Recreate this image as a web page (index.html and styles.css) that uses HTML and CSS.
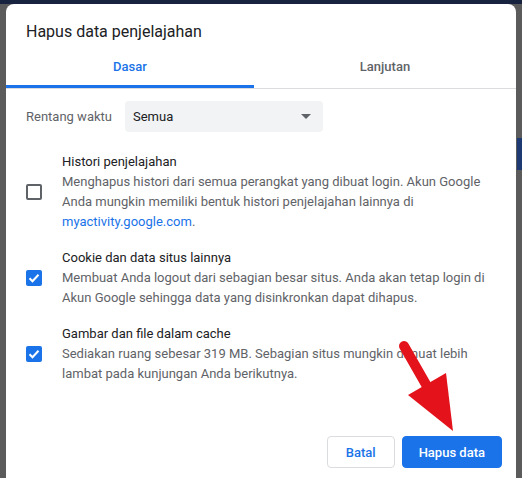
FILE: index.html
```html
<!DOCTYPE html>
<html lang="id">
<head>
  <meta charset="UTF-8">
  <meta name="viewport" content="width=device-width, initial-scale=1">
  <title>Hapus data penjelajahan</title>
  <link rel="stylesheet" href="styles.css">
</head>
<body>

  <div class="dialog">
    <h1 class="title">Hapus data penjelajahan</h1>

    <div class="tabs">
      <div class="tab active">Dasar</div>
      <div class="tab">Lanjutan</div>
    </div>

    <div class="content">
      <div class="range">
        <span class="range-label">Rentang waktu</span>
        <div class="select">
          <span>Semua</span>
          <span class="caret"></span>
        </div>
      </div>

      <div class="item">
        <div class="checkbox"></div>
        <div class="item-text">
          <div class="item-title">Histori penjelajahan</div>
          <div class="item-desc">Menghapus histori dari semua perangkat yang dibuat login. Akun Google Anda mungkin memiliki bentuk histori penjelajahan lainnya di <a href="#">myactivity.google.com</a>.</div>
        </div>
      </div>

      <div class="item">
        <div class="checkbox checked">
          <svg viewBox="0 0 16 16"><path d="M3.5 8.2l3 3 6-6.4" /></svg>
        </div>
        <div class="item-text">
          <div class="item-title">Cookie dan data situs lainnya</div>
          <div class="item-desc">Membuat Anda logout dari sebagian besar situs. Anda akan tetap login di Akun Google sehingga data yang disinkronkan dapat dihapus.</div>
        </div>
      </div>

      <div class="item">
        <div class="checkbox checked">
          <svg viewBox="0 0 16 16"><path d="M3.5 8.2l3 3 6-6.4" /></svg>
        </div>
        <div class="item-text">
          <div class="item-title">Gambar dan file dalam cache</div>
          <div class="item-desc">Sediakan ruang sebesar 319 MB. Sebagian situs mungkin dimuat lebih lambat pada kunjungan Anda berikutnya.</div>
        </div>
      </div>
    </div>

    <div class="footer">
      <button class="btn">Batal</button>
      <button class="btn primary">Hapus data</button>
    </div>
  </div>

  <!-- panah penunjuk ke tombol Hapus data -->
  <svg class="arrow" width="522" height="478" viewBox="0 0 522 478">
    <line x1="404" y1="346" x2="428" y2="388" stroke="#e4121b" stroke-width="10" stroke-linecap="round" />
    <polygon points="408,395 446,373 453,431" fill="#e4121b" />
  </svg>

</body>
</html>
```

FILE: styles.css
```css
body {
  margin: 0;
  height: 478px;
  overflow: hidden;
  padding: 4px 0 0 6px;
  box-sizing: border-box;
  font-family: Roboto, "Liberation Sans", Arial, sans-serif;
  background:
    linear-gradient(#1d3b72, #1d3b72) right 0 top 138px / 5px 32px no-repeat,
    linear-gradient(#182340 0 4px, #5b5b5b 4px);
}

.dialog {
  width: 510px;
  height: 480px;
  background-color: white;
  border-radius: 8px 8px 0 0;
  display: flex;
  flex-direction: column;
}

.title {
  margin: 0;
  padding: 18px 20px 0;
  font-size: 16px;
  font-weight: 400;
  line-height: 20px;
  color: #202124;
}

.tabs {
  display: flex;
  margin-top: 6px;
  border-bottom: 1px solid #dadce0;
}

.tab {
  padding: 9px 0 8px;
  line-height: 20px;
  font-size: 13px;
  font-weight: 500;
  text-align: center;
  color: #5f6368;
  border-bottom: 3px solid transparent;
  width: 262px;
}

.tab.active {
  width: 248px;
  color: #1a73e8;
  border-bottom-color: #1a73e8;
}

.content {
  padding: 0 20px;
}

.range {
  display: flex;
  align-items: center;
  margin-top: 12px;
}

.range-label {
  width: 99px;
  font-size: 13px;
  color: #5f6368;
}

.select {
  width: 198px;
  height: 31px;
  box-sizing: border-box;
  padding: 0 8px;
  display: flex;
  align-items: center;
  justify-content: space-between;
  background-color: #f1f3f4;
  border-radius: 4px;
  font-size: 13px;
  color: #202124;
}

.caret {
  width: 0;
  height: 0;
  margin-right: 4px;
  border-left: 5px solid transparent;
  border-right: 5px solid transparent;
  border-top: 5px solid #5f6368;
}

.item {
  display: flex;
  align-items: center;
  margin-top: 16px;
}

.range + .item {
  margin-top: 20px;
}

.checkbox {
  flex: none;
  width: 16px;
  height: 16px;
  box-sizing: border-box;
  border: 2px solid #5f6368;
  border-radius: 2px;
  margin-right: 20px;
}

.checkbox.checked {
  border: none;
  background-color: #1a73e8;
}

.checkbox svg {
  display: block;
  width: 16px;
  height: 16px;
  fill: none;
  stroke: white;
  stroke-width: 2;
}

.item-text {
  font-size: 13px;
  line-height: 20px;
}

.item-title {
  color: #202124;
}

.item-desc {
  color: #5f6368;
}

.item-desc a {
  color: #1a73e8;
  text-decoration: none;
}

.footer {
  display: flex;
  justify-content: flex-end;
  gap: 7px;
  padding: 0 14px 0 0;
  margin-top: 52px;
}

.btn {
  height: 32px;
  padding: 0 18px;
  border: 1px solid #dadce0;
  border-radius: 4px;
  background-color: white;
  color: #1a73e8;
  font-family: inherit;
  font-size: 13px;
  font-weight: 500;
  cursor: pointer;
}

.btn.primary {
  padding: 0 16px;
  background-color: #1a73e8;
  border-color: #1a73e8;
  color: white;
}

.arrow {
  position: absolute;
  left: 0;
  top: 0;
  pointer-events: none;
}
```
